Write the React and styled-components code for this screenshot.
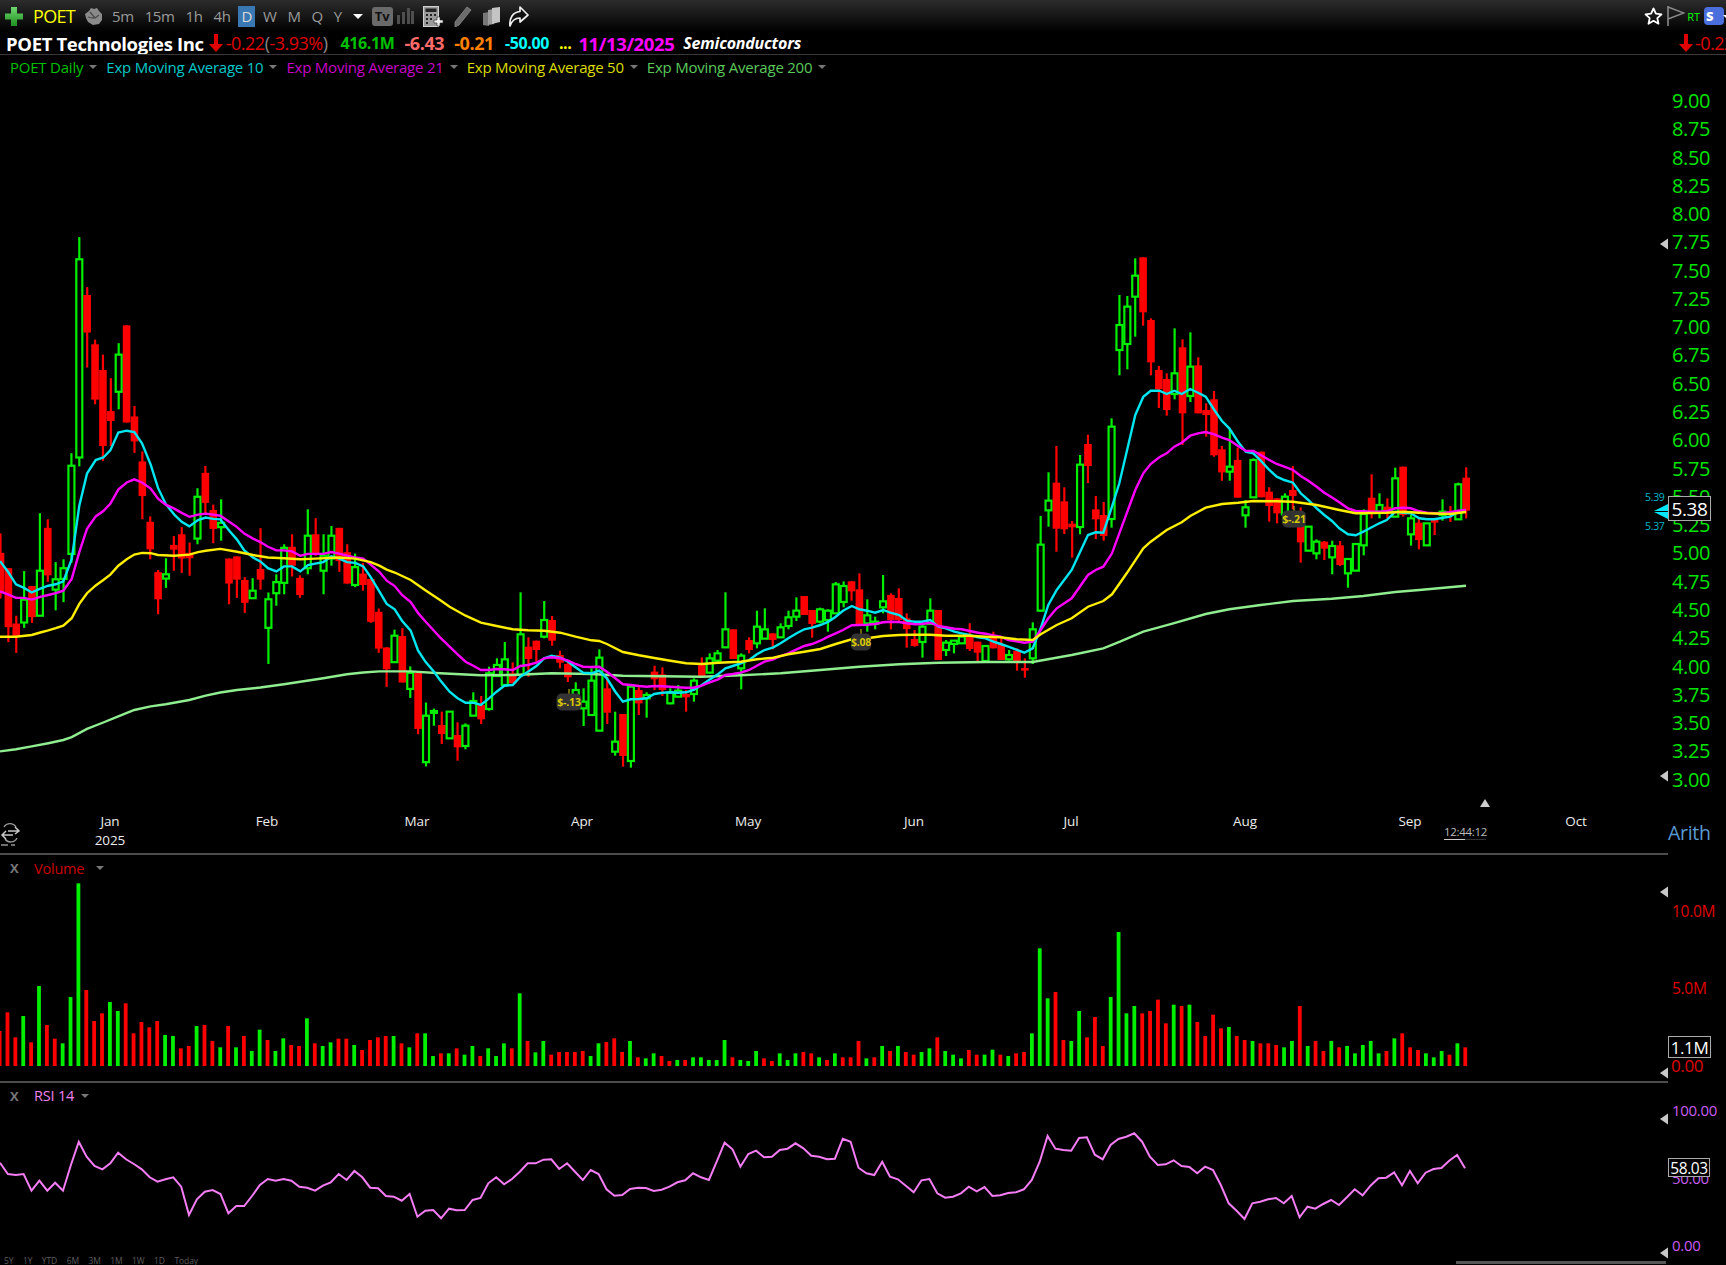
import React from 'react';
import styled, { createGlobalStyle } from 'styled-components';

const GlobalStyle = createGlobalStyle`
  html, body {
    margin: 0;
    padding: 0;
    background: #000;
  }
  body {
    font-family: "Open Sans", "Noto Sans", sans-serif;
  }
`;

// readings are kept in the scale they were measured at, chart helpers bring them to page pixels
const slotX = (i) => 0.5 + 7.88 * i;
const scaleCandles = (rows, y0, sy) =>
  rows.map(([up, wt, bt, bb, wb]) => ({
    up,
    wickTop: y0 + wt / sy,
    bodyTop: y0 + bt / sy,
    bodyBottom: y0 + bb / sy,
    wickBottom: y0 + wb / sy,
  }));
const scalePoints = (rows, x0, sx, y0, sy) => rows.map(([x, y]) => [x0 + x / sx, y0 + y / sy]);

const candles = [
  ...scaleCandles([
    [0,878,932,1040,1060],[0,975,975,1140,1182],[0,1108,1130,1165,1212],[1,983,1063,1127,1142],[0,1025,1025,1112,1128],
    [1,821,982,1108,1108],[0,838,862,995,1013],[1,958,1006,1035,1093],[1,950,975,1005,1070],[1,653,688,935,960],
    [1,48,110,665,690],[0,188,210,315,413],[0,335,348,503,516],[0,377,420,633,675],[0,443,535,563,633],
    [1,345,377,481,530],[0,295,295,567,567],[0,521,550,620,652],[0,648,676,773,838],[0,830,845,922,950],
    [0,980,986,1062,1104],[1,947,992,1004,1030],[0,885,910,923,982],[0,860,880,948,988],[0,903,932,947,996],
    [1,751,775,892,908],[0,689,708,792,825],[0,797,812,865,905],[1,782,848,860,898],[0,948,948,1018,1076],
    [0,942,942,1007,1058],[0,1000,1008,1072,1100],[1,1003,1038,1059,1060],[0,863,977,1007,1035],[1,1043,1062,1142,1243],
    [1,992,1014,1045,1080],[1,908,918,1016,1048],[0,880,915,968,998],[0,995,1002,1050,1058],[1,810,884,975,992],
    [0,835,880,938,940],[1,880,940,982,1048],[1,857,884,948,968],[0,862,862,955,985],[0,908,930,1018,1018],
    [1,934,972,1022,1028],[0,960,990,1022,1038],[0,1005,1005,1125,1128],[0,1088,1097,1200,1212],[0,1196,1197,1258,1307],
    [1,1147,1164,1238,1240],[0,1143,1165,1295,1295],[1,1250,1268,1313,1338],[0,1268,1268,1425,1440],[1,1351,1388,1518,1530],
    [1,1368,1375,1380,1416],
  ], 220, 2.8),
  ...scaleCandles([
    [0,575,615,642,672],[1,575,575,655,655],[0,607,645,682,722],[1,610,617,678,688],[1,517,543,587,588],
    [0,528,555,598,612],[1,440,460,567,572],[1,415,435,468,470],[1,366,418,495,498],[0,427,460,490,490],
    [1,217,343,465,465],[0,352,380,417,470],[0,362,362,390,425],[1,243,300,350,355],[0,288,300,362,377],
    [0,392,405,428,445],[0,420,432,472,486],[1,487,510,530,545],[1,505,545,565,618],[1,445,482,585,585],
    [1,388,413,632,632],[0,470,505,578,612],[1,575,665,695,707],[0,582,582,708,740],[1,500,500,723,743],
    [0,502,510,550,585],[1,517,525,535,593],[0,437,455,478,510],[0,442,463,510,528],[1,505,518,550,553],
    [1,495,512,530,532],[0,510,522,532,575],[1,475,482,522,545],[0,412,430,470,470],[1,400,415,458,460],
    [1,390,400,422,427],[1,217,328,382,382],[0,328,328,417,417],[1,400,407,445,508],[0,352,360,390,400],
    [1,272,320,370,385],[1,265,328,356,356],[0,340,340,360,388],[1,310,322,352,354],[1,272,292,318,328],
    [1,232,272,290,303],[0,228,228,285,285],[0,270,270,312,353],[1,263,268,305,310],[1,268,272,300,335],
    [1,186,193,280,282],[1,184,198,246,262],[0,184,184,214,242],[0,160,208,315,318],[1,238,286,310,335],
    [1,290,305,312,328],[1,165,244,262,280],[0,220,225,300,328],[0,205,234,300,305],[0,280,295,327,383],
    [0,330,357,378,380],[1,312,320,366,413],[1,235,272,312,315],[0,270,270,420,420],[1,360,368,390,408],
    [1,360,362,372,400],[1,345,350,370,372],[0,310,345,387,393],[0,365,365,398,425],[1,378,378,423,425],
    [0,335,350,385,385],
  ], 520, 3),
  ...scaleCandles([
    [0,1195,1212,1260,1260],[1,1230,1245,1258,1262],[0,1225,1232,1265,1292],[0,1255,1284,1292,1313],[1,1147,1168,1255,1272],
    [1,828,914,1112,1115],[1,697,782,811,860],[0,618,728,866,935],[0,742,784,868,882],[0,843,851,862,953],
    [1,645,674,861,883],[0,584,612,678,729],[0,768,808,838,897],[0,786,825,888,902],[1,535,560,837,863],
    [1,165,255,330,406],[1,168,200,312,388],[1,55,107,170,290],[0,52,52,217,257],[0,235,240,367,406],
    [0,378,390,448,504],[0,400,417,510,527],[1,265,400,462,478],[0,298,322,520,615],[1,277,380,468,486],
    [0,352,376,520,520],[0,490,510,525,590],[0,453,478,646,650],[0,618,628,697,722],[1,568,680,695,722],
    [0,623,660,773,773],[1,780,802,826,863],[1,655,660,772,773],[0,635,635,772,772],[0,742,755,798,845],
    [0,775,775,820,850],[1,760,770,823,825],[0,678,750,768,808],[0,802,830,907,968],[1,860,860,932,934],
    [1,898,905,940,958],[0,903,905,926,960],[1,902,918,952,1003],[0,903,916,975,978],[1,955,957,1000,1043],
    [1,912,912,992,992],[1,808,822,916,946],[0,703,773,815,835],[1,760,795,815,835],[0,775,800,815,835],
    [1,683,715,830,830],[0,680,680,825,830],[1,825,835,883,917],[0,835,848,900,928],[1,850,850,916,918],
    [0,840,840,848,885],[1,778,815,825,842],[0,798,815,825,846],[1,728,733,838,838],[0,682,713,812,835],
  ], 240, 3),
];

const ema10 = [
  ...scalePoints([[0,955],[24,985],[48,1020],[72,1030],[95,1043],[121,1032],[145,1024],[167,1020],[190,1012],[215,950],[238,800],[261,710],[287,672],[310,665],[331,645],[355,595],[380,590],[403,594],[426,625],[452,685],[474,750],[497,795],[523,825],[545,845],[568,858],[594,840],[617,833],[640,837],[661,838],[688,870],[711,895],[733,925],[759,945],[781,956],[804,975],[829,984],[852,970],[876,970],[901,984],[924,966],[946,962],[970,958],[994,942],[1018,948],[1041,958],[1066,960],[1090,970],[1112,1000],[1138,1040],[1160,1075],[1184,1090],[1206,1122],[1232,1150],[1254,1205],[1277,1238],[1302,1265]], 0, 3, 220, 2.8),
  ...scalePoints([[0,480],[25,515],[46,535],[67,548],[87,548],[107,555],[128,535],[148,515],[168,497],[190,495],[210,470],[230,455],[252,438],[272,415],[292,407],[314,413],[335,425],[354,442],[374,458],[396,460],[416,452],[436,475],[458,515],[478,545],[498,538],[520,537],[540,535],[560,522],[581,518],[602,517],[622,518],[643,517],[663,510],[684,495],[703,480],[727,462],[746,445],[765,438],[786,430],[808,420],[828,403],[848,390],[871,382],[890,370],[910,355],[932,340],[952,328],[972,323],[994,315],[1015,305],[1034,290],[1053,272],[1076,258],[1096,268],[1116,272],[1137,278],[1158,270],[1177,278],[1200,285],[1220,302],[1240,305],[1259,305],[1281,300],[1302,320],[1322,325],[1344,335],[1363,340],[1384,345],[1406,352],[1426,355],[1446,365],[1465,372]], 440, 2.613, 520, 3),
  ...scalePoints([[25,1220],[73,1238],[98,1225],[122,1165],[145,1095],[170,1050],[215,990],[264,885],[287,877],[310,878],[336,800],[358,730],[380,635],[406,525],[430,470],[452,452],[478,452],[500,462],[523,452],[545,462],[571,447],[594,458],[617,470],[643,510],[666,543],[688,565],[714,605],[737,635],[760,640],[782,662],[808,690],[830,710],[853,720],[879,728],[902,760],[925,780],[950,805],[973,825],[995,842],[1018,865],[1044,883],[1067,886],[1090,875],[1115,862],[1138,850],[1160,840],[1186,815],[1210,818],[1232,820],[1258,835],[1281,838],[1303,838],[1325,834],[1350,830],[1374,815],[1398,812]], 1000, 3, 240, 3),
];

const ema21 = [
  ...scalePoints([[0,1040],[24,1048],[48,1058],[72,1058],[95,1063],[121,1055],[145,1050],[167,1045],[190,1038],[215,1005],[238,930],[261,865],[287,830],[310,815],[331,795],[355,755],[380,735],[403,726],[426,735],[452,752],[474,780],[497,797],[523,808],[545,820],[568,831],[594,825],[617,822],[640,825],[661,828],[688,845],[711,860],[733,878],[759,892],[781,902],[804,915],[829,925],[852,925],[876,928],[901,940],[924,935],[946,935],[970,935],[994,930],[1018,934],[1041,940],[1066,945],[1090,948],[1112,965],[1138,985],[1160,1010],[1184,1025],[1206,1050],[1232,1070],[1254,1100],[1277,1125],[1302,1150]], 0, 3, 220, 2.8),
  ...scalePoints([[0,352],[25,380],[46,403],[67,425],[87,437],[107,450],[128,450],[148,447],[168,448],[190,450],[210,438],[230,435],[252,428],[272,415],[292,412],[314,415],[335,422],[354,432],[374,440],[396,441],[416,440],[436,455],[458,475],[478,493],[498,495],[520,498],[540,500],[560,498],[581,499],[602,500],[622,502],[643,503],[663,503],[684,497],[703,488],[727,478],[746,465],[765,462],[786,458],[808,450],[828,437],[848,425],[871,418],[890,408],[910,400],[932,388],[952,378],[972,372],[994,362],[1015,350],[1034,340],[1053,330],[1076,316],[1096,315],[1116,314],[1137,312],[1158,307],[1177,305],[1200,306],[1220,310],[1240,313],[1259,312],[1281,308],[1302,318],[1322,322],[1344,326],[1363,328],[1384,333],[1406,338],[1426,341],[1446,346],[1465,350]], 440, 2.613, 520, 3),
  ...scalePoints([[25,1200],[73,1208],[98,1205],[122,1170],[145,1135],[170,1105],[215,1075],[264,1005],[287,990],[310,980],[336,940],[358,880],[380,820],[406,750],[430,700],[452,672],[478,652],[500,640],[523,620],[545,608],[571,587],[594,580],[617,576],[643,583],[666,593],[688,600],[714,618],[737,632],[760,633],[782,645],[808,660],[830,672],[853,680],[879,690],[902,708],[925,722],[950,740],[973,758],[995,772],[1018,787],[1044,805],[1067,813],[1090,814],[1115,815],[1138,815],[1160,814],[1186,805],[1210,803],[1232,805],[1258,814],[1281,818],[1303,820],[1325,820],[1350,817],[1374,812],[1398,810]], 1000, 3, 240, 3),
];

const ema50 = [
  ...scalePoints([[0,1167],[48,1167],[95,1162],[121,1155],[145,1149],[167,1143],[190,1136],[215,1115],[238,1075],[261,1045],[287,1023],[310,1008],[331,993],[355,968],[380,950],[403,937],[426,932],[452,933],[474,938],[523,940],[568,937],[594,930],[617,926],[661,921],[711,929],[759,938],[804,945],[852,947],[901,950],[946,948],[1018,945],[1066,948],[1112,958],[1138,968],[1160,979],[1184,987],[1232,1008],[1277,1037]], 0, 3, 220, 2.8),
  ...scalePoints([[0,240],[25,260],[67,287],[107,308],[148,318],[190,328],[230,331],[272,332],[314,338],[354,350],[396,361],[416,363],[436,372],[478,396],[520,406],[560,414],[602,422],[643,430],[684,432],[727,428],[786,425],[828,418],[871,413],[910,403],[952,395],[994,387],[1034,372],[1076,358],[1116,355],[1158,348],[1200,345],[1240,344],[1281,344],[1322,347],[1384,347],[1426,350]], 440, 2.613, 520, 3),
  ...scalePoints([[0,1192],[50,1198],[98,1200],[122,1183],[170,1155],[215,1135],[264,1100],[310,1083],[336,1063],[380,1000],[430,925],[452,905],[500,870],[545,847],[571,828],[617,803],[666,792],[714,788],[760,783],[830,784],[879,785],[950,795],[1018,810],[1067,820],[1160,818],[1210,815],[1281,820],[1350,822],[1398,816]], 1000, 3, 240, 3),
];

const ema200 = [
  ...scalePoints([[0,1488],[48,1482],[95,1474],[145,1465],[190,1456],[215,1448],[261,1425],[310,1407],[355,1390],[403,1372],[452,1362],[497,1356],[568,1344],[617,1332],[661,1323],[711,1316],[781,1309],[852,1300],[901,1293],[970,1283],[1041,1272],[1090,1267],[1138,1264],[1232,1264]], 0, 3, 220, 2.8),
  ...scalePoints([[0,460],[107,466],[190,465],[292,460],[396,462],[478,467],[581,469],[684,470],[786,466],[890,460],[994,450],[1096,440],[1200,433],[1302,428],[1426,426]], 440, 2.613, 520, 3),
  ...scalePoints([[0,1266],[98,1266],[215,1245],[310,1225],[360,1205],[430,1175],[520,1150],[617,1122],[688,1108],[782,1095],[879,1083],[995,1076],[1090,1068],[1186,1056],[1258,1050],[1398,1037]], 1000, 3, 240, 3),
];

// negative = down day (red)
const volumes = [
  -483,-427,-502,438,-517,348,-465,-506,520,381,40,-360,-453,-430,396,423,-400,-490,-456,-472,-453,495,498,-535,-528,468,-465,-513,532,-468,532,-498,543,479,-510,543,505,-525,-528,445,-520,528,517,-506,-506,525,-540,-510,-502,-498,498,-520,532,-490,490,558,-550,550,-535,554,528,-558,535,558,520,-535,370,-513,547,513,-554,-546,-546,-546,-543,558,520,-516,-505,-546,513,-562,565,550,-558,-573,570,-570,562,562,570,570,510,-562,570,
  573,543,-565,-573,550,570,550,-546,-550,562,-570,550,-562,-562,-513,565,-562,528,-543,528,-546,-554,546,535,-502,543,554,565,-540,-554,554,539,-554,558,-550,-546,490,235,385,-366,-510,513,423,-502,-441,-528,381,186,430,408,-430,-423,-389,-460,404,-408,404,-456,-498,-434,-475,471,-498,-510,513,-520,-520,-525,532,513,-408,528,-513,-543,513,-532,528,550,525,513,550,-543,505,-490,-532,-540,550,562,543,-554,520,-532,
];

const rsi = [
  128,162,165,162,212,182,212,188,212,135,65,110,138,148,130,98,118,132,148,172,185,178,172,200,285,238,215,210,222,280,258,258,228,195,177,182,177,182,200,203,212,197,187,162,180,153,172,203,205,228,230,242,222,290,272,270,295,266,271,270,240,234,190,172,193,177,155,130,130,119,118,147,130,155,180,150,162,208,227,225,207,203,204,213,209,200,187,181,160,172,180,125,68,88,140,102,92,112,110,90,86,70,85,107,110,118,116,56,65,143,160,165,125,170,178,197,217,181,177,220,233,230,220,200,214,201,228,226,219,217,208,180,125,48,86,90,92,54,52,104,118,75,57,50,40,65,110,135,133,121,138,141,160,140,150,195,250,272,297,250,245,238,234,250,228,292,260,266,252,240,255,232,208,226,197,175,173,157,196,153,190,158,147,144,122,105,145,
];

const toPath = (pts) => pts.map(([x, y]) => `${x.toFixed(1)},${y.toFixed(1)}`).join(' ');

const priceTicks = ['9.00','8.75','8.50','8.25','8.00','7.75','7.50','7.25','7.00','6.75','6.50','6.25','6.00','5.75','5.50','5.25','5.00','4.75','4.50','4.25','4.00','3.75','3.50','3.25','3.00'];
const months = [['Jan',110],['Feb',267],['Mar',417],['Apr',582],['May',748],['Jun',914],['Jul',1071],['Aug',1245],['Sep',1410],['Oct',1576]];
const earnings = [
  { label: '$-.13', x: 569, y: 702, w: 25 },
  { label: '$.08', x: 861, y: 642, w: 20 },
  { label: '$-.21', x: 1294, y: 519, w: 24 },
];
const intervals = ['5m', '15m', '1h', '4h', 'D', 'W', 'M', 'Q', 'Y'];
const ranges = ['5Y', '1Y', 'YTD', '6M', '3M', '1M', '1W', '1D', 'Today'];
const studies = [
  { name: 'POET Daily', color: '#00c000' },
  { name: 'Exp Moving Average 10', color: '#00c8c8' },
  { name: 'Exp Moving Average 21', color: '#c800c8' },
  { name: 'Exp Moving Average 50', color: '#dcdc00' },
  { name: 'Exp Moving Average 200', color: '#5cc85c' },
];

const Page = styled.div`
  width: 1726px;
  height: 1265px;
  overflow: hidden;
  display: flex;
  flex-direction: column;
  background: #000;
  color: #fff;
`;

const Toolbar = styled.header`
  height: 32px;
  flex: none;
  display: flex;
  align-items: center;
  padding-left: 5px;
  background: linear-gradient(#2c2c2c, #000);
`;

const Symbol = styled.span`
  margin-left: 10px;
  font-size: 18px;
  color: #ff0;
  letter-spacing: -0.7px;
`;

const IntervalGroup = styled.div`
  display: flex;
  align-items: center;
  gap: 5px;
  margin-left: 5px;
`;

const Interval = styled.span`
  height: 21px;
  line-height: 21px;
  padding: 0 3px;
  font-size: 15px;
  letter-spacing: -0.4px;
  color: ${(p) => (p.$active ? '#d8d8d8' : '#9a9a9a')};
  background: ${(p) => (p.$active ? '#3a78b4' : 'transparent')};
`;

const CaretDown = styled.span`
  margin-left: ${(p) => p.$gap || 8}px;
  width: 0;
  height: 0;
  border-left: ${(p) => p.$size || 5}px solid transparent;
  border-right: ${(p) => p.$size || 5}px solid transparent;
  border-top: ${(p) => p.$size || 5}px solid ${(p) => p.$color || '#fff'};
`;

const TvBadge = styled.span`
  width: 21px;
  height: 19px;
  margin-left: 9px;
  border-radius: 3px;
  background: #6a6a6a;
  color: #111;
  font-size: 13px;
  font-weight: 700;
  line-height: 19px;
  text-align: center;
`;

const ToolIcon = styled.svg`
  flex: none;
  display: block;
  margin-left: ${(p) => p.$gap || 0}px;
`;

const ToolbarRight = styled.div`
  margin-left: auto;
  display: flex;
  align-items: center;
  padding-right: 2px;
`;

const RtTag = styled.span`
  margin-left: 2px;
  font-size: 11px;
  color: #0f0;
`;

const ScannerBadge = styled.span`
  width: 20px;
  height: 18px;
  margin-left: 4px;
  border-radius: 4px;
  background: #4a6fdc;
  color: #fff;
  font-size: 13px;
  font-weight: 800;
  line-height: 18px;
  padding-left: 2px;
  box-sizing: border-box;
  display: flex;
  align-items: center;
  gap: 1px;
`;

const InfoBar = styled.div`
  height: 23px;
  flex: none;
  box-sizing: border-box;
  border-bottom: 1px solid #383838;
  display: flex;
  align-items: center;
  padding-left: 6px;
  white-space: nowrap;
  overflow: hidden;
`;

const Company = styled.span`
  font-size: 18.5px;
  font-weight: 700;
  letter-spacing: -0.35px;
`;

const ChangeText = styled.span`
  margin-left: ${(p) => p.$gap || 0}px;
  font-size: 18px;
  letter-spacing: -0.5px;
  color: ${(p) => p.$color || '#e00000'};
`;

const Stat = styled.span`
  margin-left: ${(p) => p.$gap}px;
  font-size: ${(p) => p.$size || 16}px;
  font-weight: 700;
  letter-spacing: -0.4px;
  color: ${(p) => p.$color};
`;

const Industry = styled.span`
  margin-left: 9px;
  font-size: 16px;
  font-weight: 700;
  font-style: italic;
  letter-spacing: -0.2px;
`;

const InfoRight = styled.span`
  margin-left: auto;
  display: flex;
  align-items: center;
  width: 52px;
  flex: none;
`;

const Legend = styled.div`
  height: 26px;
  box-sizing: border-box;
  padding: 0 0 2px 10px;
  flex: none;
  display: flex;
  align-items: center;
  gap: 9px;
`;

const LegendItem = styled.span`
  display: flex;
  align-items: center;
  font-size: 15px;
  letter-spacing: -0.22px;
  color: ${(p) => p.$color};
`;

const Pane = styled.section`
  height: ${(p) => p.$h}px;
  flex: none;
  display: grid;
  grid-template-columns: 1668px 58px;
`;

const ChartColumn = styled.div`
  display: flex;
  flex-direction: column;
  border-bottom: ${(p) => (p.$last ? 'none' : '2px solid #4c4c4c')};
  min-height: 0;
`;

const ChartSvg = styled.svg`
  display: block;
  width: 1668px;
  height: ${(p) => p.$h}px;
  overflow: visible;
  flex: none;
`;

const MonthLabel = styled.text`
  font-family: "Open Sans", sans-serif;
  font-size: 13.5px;
  fill: #ececec;
  text-anchor: middle;
  letter-spacing: -0.1px;
`;

const ClockText = styled.text`
  font-family: "Open Sans", sans-serif;
  font-size: 11.5px;
  fill: #bbb;
  letter-spacing: -0.3px;
`;

const QuoteText = styled.text`
  font-family: "Open Sans", sans-serif;
  font-size: 10.5px;
  fill: #00b8c8;
  letter-spacing: -0.3px;
`;

const EarningsText = styled.text`
  font-family: "Open Sans", sans-serif;
  font-size: 10.5px;
  font-weight: 700;
  fill: #d8c800;
  text-anchor: middle;
  letter-spacing: -0.2px;
`;

const Axis = styled.div`
  position: relative;
  display: flex;
  flex-direction: column;
  gap: ${(p) => p.$gap || 0}px;
  padding-top: ${(p) => p.$top}px;
  box-sizing: border-box;
`;

const AxisTick = styled.div`
  height: ${(p) => p.$h}px;
  display: flex;
  align-items: center;
  flex: none;
  padding-left: ${(p) => p.$left || 4}px;
  font-size: ${(p) => p.$size}px;
  letter-spacing: ${(p) => p.$track || '-0.4px'};
  color: ${(p) => p.$color};
`;

const ScaleMode = styled.div`
  margin-top: auto;
  margin-bottom: 8px;
  height: 28px;
  line-height: 28px;
  font-size: 19.5px;
  letter-spacing: -0.3px;
  color: #5b9bd5;
`;

const ValueBadge = styled.div`
  position: absolute;
  left: 0;
  top: ${(p) => p.$top}px;
  width: ${(p) => p.$w}px;
  height: ${(p) => p.$h}px;
  box-sizing: border-box;
  border: 1px solid #aaa;
  background: #000;
  color: #fff;
  display: flex;
  align-items: center;
  justify-content: center;
  font-size: ${(p) => p.$size}px;
  letter-spacing: -0.4px;
`;

const PaneHeader = styled.div`
  height: ${(p) => p.$h}px;
  box-sizing: border-box;
  padding-bottom: ${(p) => p.$lift || 0}px;
  flex: none;
  display: flex;
  align-items: center;
`;

const CloseMark = styled.span`
  width: 34px;
  padding-left: 10px;
  box-sizing: border-box;
  font-size: 13px;
  font-weight: 700;
  color: #777;
`;

const PaneTitle = styled.span`
  font-size: 14.5px;
  letter-spacing: -0.2px;
  color: ${(p) => p.$color};
`;

const RangeBar = styled.div`
  flex: 1;
  min-height: 0;
  display: flex;
  align-items: flex-end;
  padding-left: 4px;
  overflow: hidden;
`;

const RangeItem = styled.span`
  font-size: 8.5px;
  line-height: 9px;
  letter-spacing: -0.1px;
  color: #5c5c5c;
  margin-right: 9.5px;
  white-space: nowrap;
`;

const ScrollThumb = styled.span`
  width: 210px;
  height: 3px;
  margin: 0 2px 1px auto;
  background: #555;
  flex: none;
`;

const PlusIcon = () => (
  <ToolIcon width="18" height="19" viewBox="0 0 18 19">
    <defs>
      <linearGradient id="plusFill" x1="0" y1="0" x2="0" y2="1">
        <stop offset="0" stopColor="#6fd66f" />
        <stop offset="1" stopColor="#1f8f1f" />
      </linearGradient>
    </defs>
    <path d="M6 0h6v6.5h6v6h-6V19H6v-6.5H0v-6h6z" fill="url(#plusFill)" />
  </ToolIcon>
);

const MouseIcon = () => (
  <ToolIcon $gap={9} width="20" height="20" viewBox="0 0 20 20">
    <path d="M1 8l4-3 2-3 3 1 3-1 2 3 3 3v6l-3 4-6 1-5-3-2-4z" fill="#8a8a8a" />
    <path d="M6 6l5 6 4-3M4 11c2 1 4 1 6 1" stroke="#4c4c4c" strokeWidth="1.3" fill="none" />
  </ToolIcon>
);

const BarsIcon = () => (
  <ToolIcon $gap={3} width="18" height="16" viewBox="0 0 18 16">
    <path d="M1 7h3v9H1zM6 4h3v12H6zM11 0h3v16h-3zM15 3h3v13h-3z" fill="#4e4e4e" />
  </ToolIcon>
);

const CalculatorIcon = () => (
  <ToolIcon $gap={9} width="21" height="21" viewBox="0 0 21 21">
    <rect x="0.5" y="0.5" width="15" height="20" fill="#9a9a9a" stroke="#d0d0d0" />
    <rect x="2.5" y="2.5" width="11" height="3.5" fill="#222" />
    <path d="M3 8h2v2H3zM7 8h2v2H7zM11 8h2v2h-2zM3 12h2v2H3zM7 12h2v2H7zM3 16h2v2H3z" fill="#222" />
    <path d="M14 11h3v3h3v3h-3v3h-3v-3h-3v-3h3z" fill="#eee" stroke="#222" strokeWidth="0.6" />
  </ToolIcon>
);

const PencilIcon = () => (
  <ToolIcon $gap={10} width="18" height="21" viewBox="0 0 18 21">
    <path d="M13 1l4 3L5 19l-4 2 0-5z" fill="#6c6c6c" stroke="#8c8c8c" strokeWidth="0.8" />
  </ToolIcon>
);

const NotesIcon = () => (
  <ToolIcon $gap={11} width="18" height="19" viewBox="0 0 18 19">
    <path d="M0 6l6-1v14l-6-1z" fill="#777" />
    <path d="M5 3l6-1v15l-6 1z" fill="#9c9c9c" />
    <path d="M9 1l8-1v15l-8 2z" fill="#c4c4c4" />
  </ToolIcon>
);

const ShareIcon = () => (
  <ToolIcon $gap={7} width="21" height="21" viewBox="0 0 21 21">
    <path d="M12 1l8 8-8 7v-4C7 12 4 14 2 20 1 12 5 6 12 5.5z" fill="#111" stroke="#f0f0f0" strokeWidth="1.7" strokeLinejoin="round" />
  </ToolIcon>
);

const StarIcon = () => (
  <ToolIcon width="19" height="19" viewBox="0 0 19 19">
    <path d="M9.5 1.5l2.4 5.2 5.6.6-4.2 3.8 1.2 5.6-5-2.9-5 2.9 1.2-5.6-4.2-3.8 5.6-.6z" fill="none" stroke="#fff" strokeWidth="1.8" strokeLinejoin="round" />
  </ToolIcon>
);

const FlagIcon = () => (
  <ToolIcon $gap={4} width="18" height="20" viewBox="0 0 18 20">
    <path d="M1 0v20" stroke="#8a8a8a" strokeWidth="1.6" />
    <path d="M1 1l16 6-16 6" fill="none" stroke="#8a8a8a" strokeWidth="1.4" />
  </ToolIcon>
);

const DownArrow = () => (
  <ToolIcon $gap={5} width="14" height="18" viewBox="0 0 14 18">
    <path d="M5 0h4v10h5l-7 8-7-8h5z" fill="#e00000" />
  </ToolIcon>
);

const LinkArrows = () => (
  <>
    <path d="M4 827a7 7 0 0 1 12 0M17 838a7 7 0 0 1-12 1" fill="none" stroke="#9a9a9a" strokeWidth="1.4" />
    <path d="M19 831H8M15 827l4 4-4 3M2 835h11M6 831l-4 4 4 4" fill="none" stroke="#c8c8c8" strokeWidth="1.5" />
    <path d="M1 845h7M11 845h4" stroke="#e0e0e0" strokeWidth="1" />
  </>
);

const Wedge = ({ y }) => <polygon points={`1668,${y - 5.5} 1668,${y + 5.5} 1660,${y}`} fill="#c8c8c8" />;

const Candle = ({ candle, x }) => {
  const color = candle.up ? '#00f000' : '#ff0000';
  const h = candle.bodyBottom - candle.bodyTop;
  return (
    <g>
      <line x1={x} x2={x} y1={candle.wickTop} y2={candle.wickBottom} stroke={color} strokeWidth="2.2" />
      {candle.up ? (
        <rect x={x - 3} y={candle.bodyTop} width="6" height={h} fill="#000" stroke={color} strokeWidth="2.2" />
      ) : (
        <rect x={x - 3.8} y={candle.bodyTop} width="7.6" height={h} fill={color} />
      )}
    </g>
  );
};

const EarningsBadge = ({ label, x, y, w }) => (
  <g>
    <line x1={x} x2={x} y1={y - 13} y2={y - 8} stroke="#d8c800" strokeWidth="1" />
    <rect x={x - w / 2} y={y - 8.5} width={w} height="17" rx="5" fill="#333" />
    <EarningsText x={x} y={y + 4}>{label}</EarningsText>
  </g>
);

const PriceChart = () => (
  <ChartSvg $h={772} viewBox="0 81 1668 772">
    {candles.map((c, i) => (
      <Candle key={i} candle={c} x={slotX(i)} />
    ))}
    <polyline points={toPath(ema200)} fill="none" stroke="#90ee90" strokeWidth="2.4" />
    <polyline points={toPath(ema10)} fill="none" stroke="#00e6f0" strokeWidth="2.4" />
    <polyline points={toPath(ema21)} fill="none" stroke="#ff00ff" strokeWidth="2.4" />
    <polyline points={toPath(ema50)} fill="none" stroke="#ffee00" strokeWidth="2.4" />
    {earnings.map((e) => (
      <EarningsBadge key={e.label} {...e} />
    ))}
    <QuoteText x="1645" y="501">5.39</QuoteText>
    <QuoteText x="1645" y="530">5.37</QuoteText>
    <polygon points="1668,504 1668,511 1654,511" fill="#00e6ff" />
    <polygon points="1668,512 1668,519 1654,512" fill="#00e6ff" />
    <Wedge y={244} />
    <Wedge y={776} />
    <polygon points="1480,807 1490,807 1485,799" fill="#ccc" />
    {months.map(([m, x]) => (
      <MonthLabel key={m} x={x} y="826">{m}</MonthLabel>
    ))}
    <MonthLabel x="110" y="845">2025</MonthLabel>
    <ClockText x="1444" y="836">12:44:12</ClockText>
    <rect x="1444" y="839" width="42" height="1" fill="#333" />
    <rect x="1444" y="839" width="21" height="1" fill="#ccc" />
    <LinkArrows />
  </ChartSvg>
);

const VolumeChart = () => (
  <ChartSvg $h={199} viewBox="0 882 1668 199">
    {volumes.map((v, i) => {
      const top = 870 + Math.abs(v) / 3;
      return (
        <rect key={i} x={slotX(i) - 2.8} y={top} width="3.8" height={1066 - top} fill={v < 0 ? '#ff0000' : '#00f000'} />
      );
    })}
    <Wedge y={892} />
    <Wedge y={1073} />
  </ChartSvg>
);

const RsiChart = () => {
  const pts = rsi.map((v, i) => [(i * 1465) / (rsi.length - 1), 1120 + v / 3]);
  return (
    <ChartSvg $h={141} viewBox="0 1111 1668 141">
      <polyline points={toPath(pts)} fill="none" stroke="#f47cf4" strokeWidth="2" />
      <Wedge y={1119} />
      <Wedge y={1253} />
    </ChartSvg>
  );
};

export default function App() {
  return (
    <>
      <GlobalStyle />
      <Page>
        <Toolbar>
          <PlusIcon />
          <Symbol>POET</Symbol>
          <MouseIcon />
          <IntervalGroup>
            {intervals.map((t) => (
              <Interval key={t} $active={t === 'D'}>{t}</Interval>
            ))}
          </IntervalGroup>
          <CaretDown $gap={8} $size={5} />
          <TvBadge>Tv</TvBadge>
          <BarsIcon />
          <CalculatorIcon />
          <PencilIcon />
          <NotesIcon />
          <ShareIcon />
          <ToolbarRight>
            <StarIcon />
            <FlagIcon />
            <RtTag>RT</RtTag>
            <ScannerBadge>S<CaretDown $gap={0} $size={3} /></ScannerBadge>
          </ToolbarRight>
        </Toolbar>

        <InfoBar>
          <Company>POET Technologies Inc</Company>
          <DownArrow />
          <ChangeText $gap={3}>-0.22</ChangeText>
          <ChangeText $color="#888">(</ChangeText>
          <ChangeText>-3.93%</ChangeText>
          <ChangeText $color="#888">)</ChangeText>
          <Stat $gap={13} $color="#00c000">416.1M</Stat>
          <Stat $gap={10} $size={18} $color="#ff6a6a">-6.43</Stat>
          <Stat $gap={10} $size={18} $color="#ff8000">-0.21</Stat>
          <Stat $gap={11} $color="#00ffff">-50.00</Stat>
          <Stat $gap={10} $color="#ffff00">...</Stat>
          <Stat $gap={7} $size={18.5} $color="#ff00ff">11/13/2025</Stat>
          <Industry>Semiconductors</Industry>
          <InfoRight>
            <DownArrow />
            <ChangeText $gap={2}>-0.22</ChangeText>
          </InfoRight>
        </InfoBar>

        <Legend>
          {studies.map((s) => (
            <LegendItem key={s.name} $color={s.color}>
              {s.name}
              <CaretDown $gap={6} $size={4} $color="#777" />
            </LegendItem>
          ))}
        </Legend>

        <Pane $h={774}>
          <ChartColumn>
            <PriceChart />
          </ChartColumn>
          <Axis $top={5.3}>
            {priceTicks.map((t) => (
              <AxisTick key={t} $h={28.29} $size={20} $color="#00e400">{t}</AxisTick>
            ))}
            <ScaleMode>Arith</ScaleMode>
            <ValueBadge $top={415} $w={43} $h={25} $size={19}>5.38</ValueBadge>
          </Axis>
        </Pane>

        <Pane $h={228}>
          <ChartColumn>
            <PaneHeader $h={27} $lift={1}>
              <CloseMark>X</CloseMark>
              <PaneTitle $color="#cc0000">Volume</PaneTitle>
              <CaretDown $gap={12} $size={4} $color="#777" />
            </PaneHeader>
            <VolumeChart />
          </ChartColumn>
          <Axis $top={43} $gap={51}>
            <AxisTick $h={26} $size={15.5} $color="#e00000" $track="-0.3px">10.0M</AxisTick>
            <AxisTick $h={26} $size={15.5} $color="#e00000" $track="-0.3px">5.0M</AxisTick>
            <AxisTick $h={26} $size={17} $color="#e00000" $left={3}>0.00</AxisTick>
            <ValueBadge $top={181} $w={43} $h={22} $size={17}>1.1M</ValueBadge>
          </Axis>
        </Pane>

        <Pane $h={182}>
          <ChartColumn $last>
            <PaneHeader $h={28} $lift={3}>
              <CloseMark>X</CloseMark>
              <PaneTitle $color="#ee82ee">RSI 14</PaneTitle>
              <CaretDown $gap={7} $size={4} $color="#777" />
            </PaneHeader>
            <RsiChart />
            <RangeBar>
              {ranges.map((r) => (
                <RangeItem key={r}>{r}</RangeItem>
              ))}
              <ScrollThumb />
            </RangeBar>
          </ChartColumn>
          <Axis $top={10} $gap={33.5}>
            <AxisTick $h={34} $size={15} $color="#c85cf0" $track="-0.3px">100.00</AxisTick>
            <AxisTick $h={34} $size={15} $color="#c85cf0" $track="-0.3px">50.00</AxisTick>
            <AxisTick $h={34} $size={15} $color="#c85cf0" $track="-0.3px">0.00</AxisTick>
            <ValueBadge $top={75} $w={42} $h={19} $size={15.5}>58.03</ValueBadge>
          </Axis>
        </Pane>
      </Page>
    </>
  );
}
